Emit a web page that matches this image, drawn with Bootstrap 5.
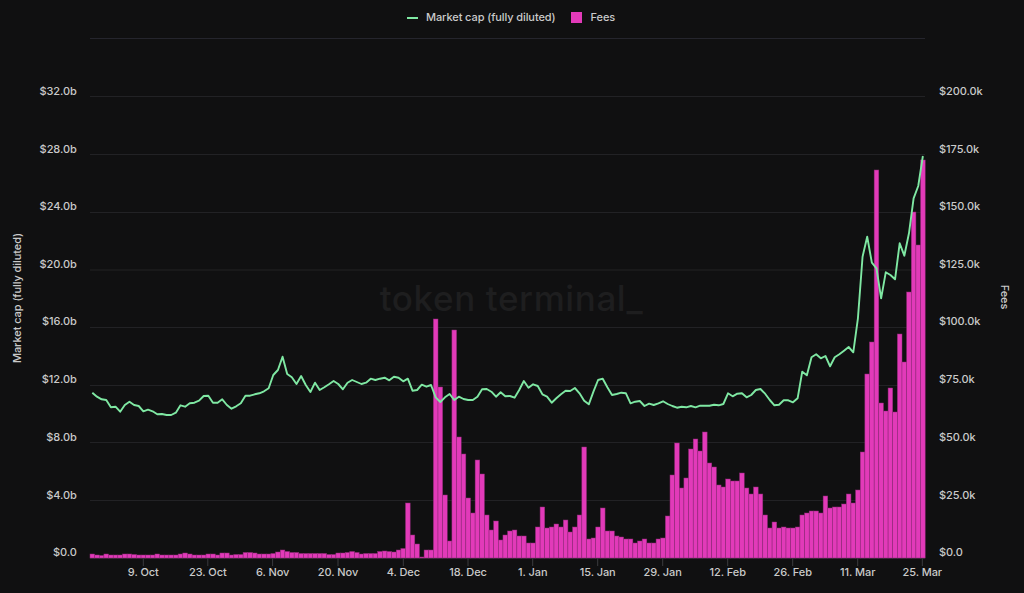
<!DOCTYPE html>
<html lang="en">
<head>
<meta charset="utf-8">
<title>Market cap and fees</title>
<link href="https://cdn.jsdelivr.net/npm/bootstrap@5.3.0/dist/css/bootstrap.min.css" rel="stylesheet">
<style>
html,body{height:100%;background:#101011;overflow:hidden}
body{font-family:Inter,"Liberation Sans",sans-serif;color:#cacaca;font-size:11px;font-weight:500}
.legend-bar{height:35px;padding-left:407px;gap:8px;letter-spacing:-.09px}
.swatch-line{width:11px;height:2px;background:#7fe8a3}
.swatch-box{width:11px;height:11px;background:#e23ab9;margin-left:7px;margin-top:-1px;margin-right:1px}
.chart-svg{display:block;width:1024px;height:558px}
.chart-svg text{font-family:Inter,"Liberation Sans",sans-serif;font-size:11px;font-weight:500;fill:#cacaca;letter-spacing:-.07px}
.chart-svg .wm{font-size:35px;fill:#1e1e1f;letter-spacing:.6px;font-weight:500}
.grid{stroke:#222225;stroke-width:1}
.grid-top{stroke:#25252d;stroke-width:1}
.tick{stroke:#3a3a3e;stroke-width:1}
.fee{fill:#e23ab9;stroke:#8f2a78;stroke-width:.5}
.cap{fill:none;stroke:#7fe8a3;stroke-width:1.9;stroke-linejoin:round}
</style>
</head>
<body>
<div class="d-flex align-items-center legend-bar">
  <span class="swatch-line"></span><span>Market cap (fully diluted)</span>
  <span class="swatch-box"></span><span>Fees</span>
</div>
<svg class="chart-svg" id="chart" viewBox="0 35 1024 558" xmlns="http://www.w3.org/2000/svg">
  <text class="wm" x="511.5" y="311" text-anchor="middle">token terminal_</text>
  <g id="grid"></g>
  <g id="bars"></g>
  <polyline class="cap" id="capline"></polyline>
  <g id="labels"></g>
  <text x="0" y="0" text-anchor="middle" transform="translate(21 298) rotate(-90)">Market cap (fully diluted)</text>
  <text x="0" y="0" text-anchor="middle" transform="translate(1001 297) rotate(90)">Fees</text>
</svg>
<script src="https://cdn.jsdelivr.net/npm/bootstrap@5.3.0/dist/js/bootstrap.bundle.min.js"></script>
<script>
var NS='http://www.w3.org/2000/svg';
function el(parent,name,attrs,txt){var e=document.createElementNS(NS,name);for(var k in attrs)e.setAttribute(k,attrs[k]);if(txt)e.textContent=txt;document.getElementById(parent).appendChild(e);return e;}
var base=558,x0=90,step=4.64;
var fees=[4,3,2.5,4,3,3,3,4,4,3.5,3,3,3,3,4,3,3,3,3,4,5,4,3,3,3,4,4,3,5,5,3,3.5,3.5,5.5,5.5,5,4,4,4,4.5,6,8,6.5,5.5,5.5,4.5,4.5,4.5,4.5,4.5,4.5,3.5,3.5,5,
5,5.5,6.5,5.5,4,4.5,4.5,4.5,6.5,7,6.5,6,8,9.5,55,23,14,1,8,8,239,171,63,17,228,121,104,60,45,98,84,43,28,37,18,23,27,28,22,22,15,15,31,51,30,31,34,31,38,26,31,43,111,19,20,31,50,27,27,22,21,19,19,15,17,19,15,15,19,20,42,83,115,
70,80,109,119,107,126,95,91,73,71,79,77,77,85,70,64,71,64,43,30,36,30,31,30,30,31,43,45,47,47,45,62,50,51,51,54,64,55,68,106,184,216,388,155,147,170,146,224,196,266,346,313,398];
var capZ=[278,290,298,300,322,320,335,315,305,315,318,334,329,334,343,342,345,345,338,316,320,310,308,302,288,287,308,308,298,315,326,319,310,287,287,283,280,274,265,225,210,170,222,232,252,228,255,276,248,270,262,253,243,252,
268,248,240,246,252,248,236,240,236,233,241,230,233,244,236,272,270,254,260,255,292,306,292,282,300,290,297,300,300,290,268,267,275,290,277,289,288,293,270,243,263,253,258,283,290,308,295,283,272,273,264,280,302,313,275,240,236,262,285,282,278,280,310,305,303,318,311,315,310,304,312,318,323,320,
322,318,322,317,317,317,314,316,312,280,289,281,280,292,285,270,267,281,300,316,314,301,301,307,295,215,226,172,163,175,168,199,172,163,152,141,157,55];
var capTop=[256.7,236.7,262.7,268.3,298.3,272.3,275,279.3,243.3,255.7,233.3,198.3,186,156];
var gridY=[96.5,154.5,212.5,270,327.5,385.5,442.5,500.5];
el('grid','line',{x1:x0,x2:925,y1:38.5,y2:38.5,'class':'grid-top'});
gridY.forEach(function(y){el('grid','line',{x1:x0,x2:925,y1:y,y2:y,'class':'grid'});});
el('grid','line',{x1:x0,x2:925,y1:558,y2:558,'class':'tick'});
fees.forEach(function(h,i){el('bars','rect',{x:(x0+i*step).toFixed(2),y:(base-h).toFixed(1),width:step,height:h,'class':'fee'});});
var pts=[];
capZ.forEach(function(v,i){pts.push((x0+i*step+2.32).toFixed(2)+','+(300+v/3).toFixed(1));});
capTop.forEach(function(y,j){pts.push((x0+(capZ.length+j)*step+2.32).toFixed(2)+','+y);});
document.getElementById('capline').setAttribute('points',pts.join(' '));
var left=['$32.0b','$28.0b','$24.0b','$20.0b','$16.0b','$12.0b','$8.0b','$4.0b','$0.0'];
var right=['$200.0k','$175.0k','$150.0k','$125.0k','$100.0k','$75.0k','$50.0k','$25.0k','$0.0'];
var labY=[94.5,152.5,210,268,325,383,440.5,498.5,556];
labY.forEach(function(y,i){
  el('labels','text',{x:76.7,y:y,'text-anchor':'end'},left[i]);
  el('labels','text',{x:939,y:y},right[i]);
});
var ticks=[[143.3,'9. Oct'],[207.8,'23. Oct'],[272.6,'6. Nov'],[338,'20. Nov'],[403.3,'4. Dec'],[468,'18. Dec'],[532.7,'1. Jan'],[597.7,'15. Jan'],[662.7,'29. Jan'],[727.7,'12. Feb'],[792.7,'26. Feb'],[857.7,'11. Mar'],[922.3,'25. Mar']];
ticks.forEach(function(t){
  el('labels','line',{x1:t[0],x2:t[0],y1:558,y2:566,'class':'tick'});
  el('labels','text',{x:t[0],y:575.5,'text-anchor':'middle'},t[1]);
});
</script>
</body>
</html>
